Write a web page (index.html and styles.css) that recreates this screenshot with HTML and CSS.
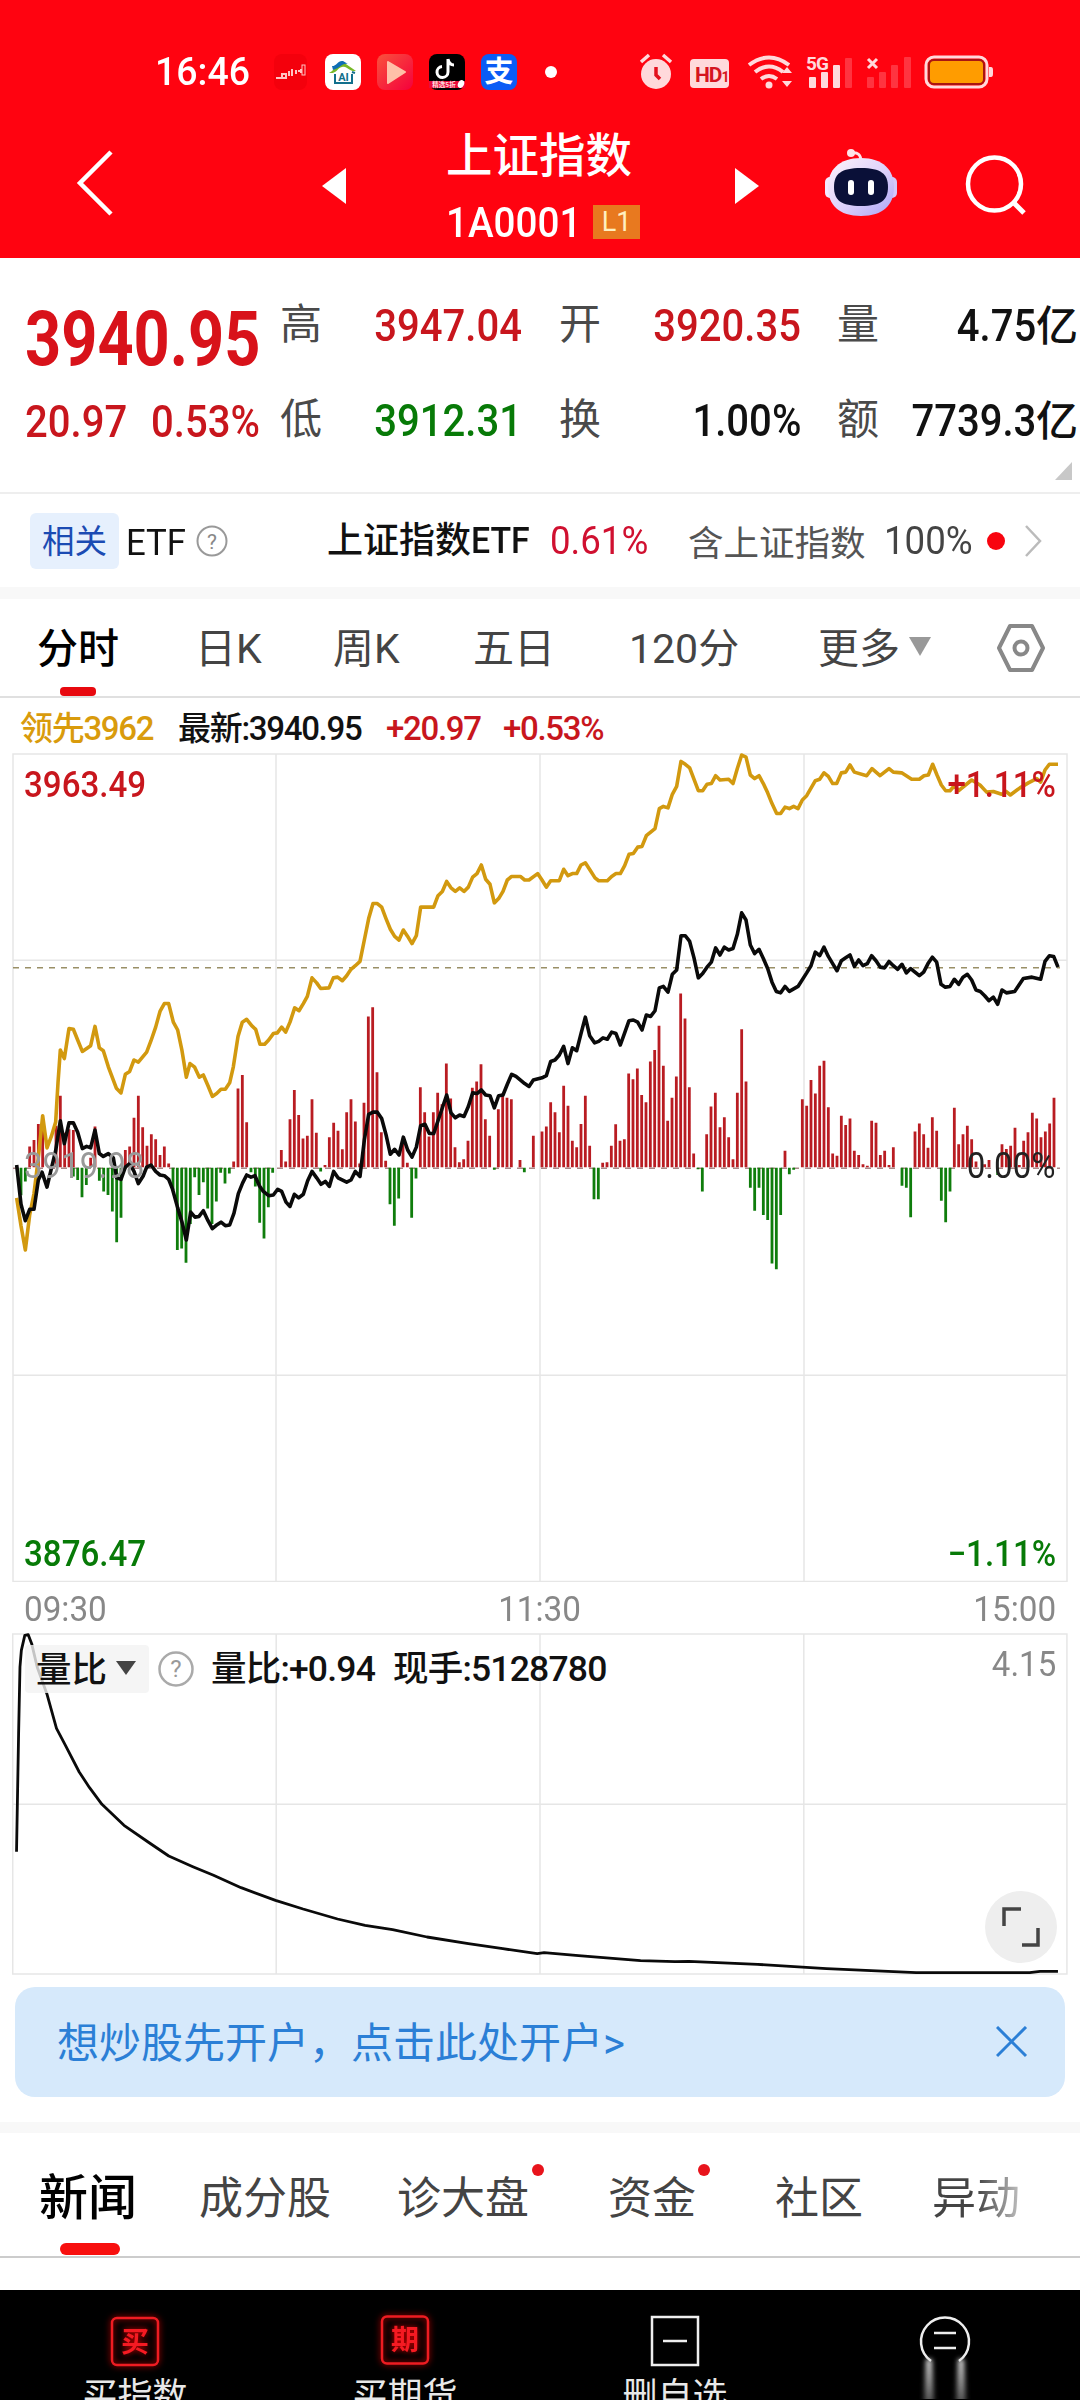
FILE: index.html
```html
<!DOCTYPE html>
<html lang="zh-CN">
<head>
<meta charset="utf-8">
<title>上证指数</title>
<link rel="stylesheet" href="styles.css">
</head>
<body>
<header class="top">
  <div class="status">
    <span class="clock num">16:46</span>
    <div class="apps">
      <svg width="36" height="36" viewBox="0 0 36 36"><rect x="1" width="33" height="36" rx="8" fill="#f4000c"/><path d="M3 24h5M9 24v-4h4v4zM16 17v5M19 15v7M23 16v4M25 17h3M28 15v4" fill="none" stroke="#ffc4c4" stroke-width="2"/><rect x="29" y="11" width="3" height="10" fill="none" stroke="#ffc4c4"/></svg>
      <svg width="36" height="36" viewBox="0 0 36 36"><rect width="36" height="36" rx="8" fill="#fff"/><path d="M4 19C12 15 11 7 18 8l13 9c-7 1-9-6-14-4C12 14 12 20 4 19z" fill="#78b928"/><path d="M7 12c5 0 6-6 11-5l5 3c-7-1-7 4-15 6z" fill="#0f6eb5"/><path d="M10 20v9h17v-9M27 18l3 1" fill="none" stroke="#126f8c" stroke-width="2"/><text x="18.500" y="27" class="ai">AI</text></svg>
      <svg width="36" height="36" viewBox="0 0 36 36"><defs><linearGradient id="play" x1="0" y1="0" x2="1" y2="1"><stop offset="0" stop-color="#f9523c"/><stop offset="1" stop-color="#f5003c"/></linearGradient></defs><rect width="36" height="36" rx="8" fill="url(#play)"/><path d="M11 8l17 10-17 11z" fill="#ffc0a8" stroke="#ffc0a8" stroke-width="2" stroke-linejoin="round"/></svg>
      <svg width="36" height="36" viewBox="0 0 36 36"><rect width="36" height="36" rx="8" fill="#000"/><path d="M19 5v13a5.500 5.500 0 1 1-6-5.500M19 5c1 5 4 6 6 6" fill="none" stroke="#fff" stroke-width="3"/><path d="M0 27h36v7H0z" fill="#e90c3c"/><text x="15" y="33" class="tag">精选5折</text><ellipse cx="32" cy="30" rx="3" ry="4" fill="#fff" transform="rotate(25 32 30)"/></svg>
      <svg width="36" height="36" viewBox="0 0 36 36"><rect width="36" height="36" rx="8" fill="#0a5cf5"/><text x="18" y="28" class="pay">支</text></svg>
      <svg width="12" height="36" viewBox="0 0 12 36"><circle cx="6" cy="18" r="6" fill="#fff"/></svg>
    </div>
    <svg class="system" width="360" height="40" viewBox="635 52 360 40">
      <g fill="#ffd9db">
        <circle cx="656" cy="74" r="15"/>
        <path d="M641 62l8-7M671 62l-8-7" stroke="#ffd9db" stroke-width="3.500"/>
        <rect x="690" y="59" width="39" height="29" rx="4"/>
        <circle cx="769" cy="85" r="3.500"/>
        <path d="M782 73l5-6 5 6zM782 81l5 6 5-6z"/>
        <rect x="809" y="77" width="7" height="11" rx="1"/><rect x="821" y="72" width="7" height="16" rx="1"/><rect x="833" y="65" width="7" height="23" rx="1"/>
        <path d="M989 67h2q2 0 2 3v4q0 3-2 3h-2z"/>
      </g>
      <path d="M656 67v8l4 4" stroke="#e3101c" stroke-width="3.500" fill="none"/>
      <path d="M761 79q8-6 16 0M755 72q14-11 28 0M749 65q20-15 40 0" fill="none" stroke="#ffd9db" stroke-width="4"/>
      <g fill="#ff3440"><rect x="845" y="58" width="7" height="30" rx="1"/><rect x="867" y="77" width="7" height="11" rx="1"/><rect x="879" y="72" width="7" height="16" rx="1"/><rect x="891" y="65" width="7" height="23" rx="1"/><rect x="904" y="57" width="7" height="31" rx="1"/></g>
      <path d="M868 59l9 9M877 59l-9 9" stroke="#ffd9db" stroke-width="3"/>
      <text x="806" y="70" class="net">5G</text>
      <text x="695" y="82" class="hd">HD<tspan font-size="14">1</tspan></text>
      <rect x="926" y="57" width="61" height="30" rx="8" fill="none" stroke="#ffd9db" stroke-width="3"/>
      <rect x="929" y="60" width="55" height="24" rx="5" fill="#ff9c00" stroke="#a81512" stroke-width="2"/>
    </svg>
  </div>
  <nav class="nav">
    <svg class="back" width="44" height="70" viewBox="0 0 44 70"><path d="M38 4L7 35l31 31" fill="none" stroke="#fff" stroke-width="4.500"/></svg>
    <svg class="prev" width="24" height="36" viewBox="0 0 24 36"><path d="M0 18L24 0v36z" fill="#fff"/></svg>
    <div class="title">
      <h1>上证指数</h1>
      <div class="code"><span class="num">1A0001</span><b>L1</b></div>
    </div>
    <svg class="next" width="24" height="36" viewBox="0 0 24 36"><path d="M24 18L0 0v36z" fill="#fff"/></svg>
    <svg class="robot" width="74" height="72" viewBox="824 146 74 72">
      <defs><linearGradient id="shell" x1="0" y1="0" x2="1" y2="1"><stop offset="0" stop-color="#fff4fa"/><stop offset=".55" stop-color="#dcd0fb"/><stop offset="1" stop-color="#aaa3f7"/></linearGradient></defs>
      <path d="M851 153q10-2 10 9" fill="none" stroke="#ffe3e8" stroke-width="3"/><circle cx="851" cy="153" r="4" fill="#ffe3e8"/>
      <rect x="825" y="177" width="12" height="21" rx="5" fill="#f5e8ff"/><rect x="885" y="177" width="12" height="21" rx="5" fill="#d5c7fa"/>
      <path d="M861 158c22 0 33 12 33 29 0 18-11 29-33 29s-33-11-33-29c0-17 11-29 33-29z" fill="url(#shell)"/>
      <path d="M861 168c20 0 27 6 27 19s-7 19-27 19-27-6-27-19 7-19 27-19z" fill="#0a1038"/>
      <rect x="848" y="180" width="6" height="15" rx="3" fill="#fff"/><rect x="868" y="180" width="6" height="15" rx="3" fill="#fff"/>
    </svg>
    <svg class="search" width="64" height="64" viewBox="964 154 64 64"><circle cx="994.500" cy="184" r="26.500" fill="none" stroke="#fff" stroke-width="4.500"/><path d="M1013 202l11 11" stroke="#fff" stroke-width="5"/></svg>
  </nav>
</header>

<section class="quote">
  <div class="last">
    <strong class="num">3940.95</strong>
    <div class="change"><span class="num">20.97</span><span class="num">0.53%</span></div>
  </div>
  <dl>
    <dt>高</dt><dd class="up"><span class="num">3947.04</span></dd>
    <dt>开</dt><dd class="up"><span class="num">3920.35</span></dd>
    <dt>量</dt><dd><span class="num">4.75</span>亿</dd>
    <dt>低</dt><dd class="down"><span class="num">3912.31</span></dd>
    <dt>换</dt><dd><span class="num">1.00%</span></dd>
    <dt>额</dt><dd><span class="num">7739.3</span>亿</dd>
  </dl>
  <i class="corner"></i>
</section>

<section class="related">
  <span class="chip">相关</span>
  <span class="etf num">ETF</span>
  <svg class="help" width="32" height="32" viewBox="0 0 32 32"><circle cx="16" cy="16" r="14.500" fill="none" stroke="#999" stroke-width="2"/><text x="16" y="23.500" class="q">?</text></svg>
  <span class="fund">上证指数<span class="num">ETF</span></span>
  <span class="rate num">0.61%</span>
  <span class="holds">含上证指数</span>
  <span class="share num">100%</span>
  <i class="dot"></i>
  <svg class="more" width="20" height="34" viewBox="0 0 20 34"><path d="M2 2l14 15L2 32" fill="none" stroke="#bbb" stroke-width="2.500"/></svg>
</section>

<nav class="periods">
  <span class="on">分时</span><span>日K</span><span>周K</span><span>五日</span><span>120分</span><span>更多<i></i></span>
  <svg width="50" height="50" viewBox="0 0 50 50"><path d="M14 3h22l11 22-11 22H14L3 25z" fill="none" stroke="#888" stroke-width="4" stroke-linejoin="round"/><circle cx="25" cy="25" r="6.500" fill="none" stroke="#888" stroke-width="4"/></svg>
</nav>

<div class="legend">
  <span class="lead">领先3962</span><span>最新:3940.95</span><span class="up">+20.97</span><span class="up">+0.53%</span>
</div>

<section class="chart price">
  <svg width="1080" height="829" viewBox="0 36.400 3240 2321.200" preserveAspectRatio="none">
    <path class="grid" d="M39 39H3201V2356H39zM828 39V2356M1620 39V2356M2412 39V2356M39 617H3201M39 1779H3201"/>
    <path class="now" d="M39 638H3180"/>
    <path class="zero" d="M39 1199H3180"/>
    <path class="bars red" d="M89 1196V1138M102 1196V1120M115 1196V1075M128 1196V1090M168 1196V1080M181 1196V996M194 1196V1100M207 1196V1090M220 1196V1092M272 1196V1170M285 1196V1082M376 1196V1148M389 1196V1138M402 1196V1058M415 1196V996M428 1196V1084M441 1196V1136M454 1196V1104M467 1196V1118M480 1196V1162M493 1196V1138M506 1196V1186M701 1196V1180M714 1196V976M727 1196V938M740 1196V1070M844 1196V1148M857 1196V1180M870 1196V1062M883 1196V980M896 1196V1050M909 1196V1116M922 1196V1108M936 1196V1006M949 1196V1100M975 1196V1190M988 1196V1112M1001 1196V1072M1014 1196V1094M1027 1196V1146M1040 1196V1042M1053 1196V1006M1066 1196V1068M1079 1196V1186M1092 1196V1016M1105 1196V774M1118 1196V748M1131 1196V930M1144 1196V1098M1157 1196V1178M1209 1196V1120M1222 1196V1184M1261 1196V972M1274 1196V1042M1287 1196V1110M1300 1196V1042M1313 1196V988M1326 1196V1020M1339 1196V906M1352 1196V1004M1365 1196V1140M1378 1196V1182M1391 1196V1174M1404 1196V1122M1417 1196V974M1430 1196V956M1443 1196V908M1456 1196V1062M1469 1196V1108M1495 1196V1034M1508 1196V990M1521 1196V1002M1534 1196V1006M1560 1196V1176M1600 1196V1108M1626 1196V1096M1639 1196V1082M1652 1196V1014M1665 1196V1042M1678 1196V1098M1691 1196V968M1704 1196V1024M1717 1196V1122M1730 1196V1140M1743 1196V1075M1756 1196V996M1769 1196V1136M1808 1196V1184M1821 1196V1182M1834 1196V1136M1847 1196V1076M1860 1196V1122M1873 1196V1118M1886 1196V934M1899 1196V950M1912 1196V920M1925 1196V994M1938 1196V1014M1951 1196V900M1964 1196V868M1977 1196V800M1990 1196V912M2003 1196V1066M2016 1196V1002M2029 1196V942M2042 1196V710M2055 1196V780M2068 1196V972M2081 1196V1158M2120 1196V1104M2133 1196V1026M2146 1196V988M2160 1196V1084M2173 1196V1056M2186 1196V1112M2199 1196V1174M2212 1196V988M2225 1196V810M2238 1196V956M2355 1196V1150M2407 1196V1006M2420 1196V1024M2433 1196V952M2446 1196V990M2459 1196V912M2472 1196V898M2485 1196V1028M2498 1196V1158M2511 1196V1164M2524 1196V1052M2537 1196V1078M2550 1196V1060M2563 1196V1150M2576 1196V1162M2589 1196V1188M2602 1196V1192M2615 1196V1066M2628 1196V1072M2641 1196V1162M2654 1196V1150M2667 1196V1190M2680 1196V1140M2745 1196V1096M2758 1196V1074M2771 1196V1104M2784 1196V1142M2797 1196V1056M2810 1196V1094M2863 1196V1030M2876 1196V1132M2889 1196V1104M2902 1196V1080M2915 1196V1118M2928 1196V1180M2954 1196V1188M2967 1196V1176M3006 1196V1132M3019 1196V1145M3032 1196V1136M3045 1196V1086M3058 1196V1190M3071 1196V1122M3084 1196V1098M3097 1196V1044M3110 1196V1060M3123 1196V1112M3136 1196V1096M3149 1196V1074M3162 1196V1002"/>
    <path class="bars green" d="M63 1198V1275M76 1198V1236M220 1198V1222M233 1198V1232M246 1198V1280M259 1198V1246M298 1198V1234M311 1198V1264M324 1198V1274M337 1198V1320M350 1198V1406M363 1198V1338M519 1198V1260M532 1198V1428M545 1198V1424M558 1198V1464M571 1198V1355M584 1198V1224M597 1198V1274M610 1198V1238M623 1198V1312M636 1198V1355M649 1198V1292M662 1198V1212M675 1198V1242M688 1198V1214M753 1198V1210M766 1198V1250M779 1198V1352M792 1198V1396M805 1198V1308M818 1198V1212M962 1198V1208M1170 1198V1300M1183 1198V1360M1196 1198V1284M1235 1198V1338M1248 1198V1228M1483 1198V1203M1573 1198V1210M1782 1198V1286M1795 1198V1286M2094 1198V1202M2107 1198V1264M2251 1198V1254M2264 1198V1318M2277 1198V1254M2290 1198V1330M2303 1198V1344M2316 1198V1466M2329 1198V1482M2342 1198V1330M2368 1198V1216M2381 1198V1203M2706 1198V1248M2719 1198V1254M2732 1198V1336M2824 1198V1290M2837 1198V1350M2850 1198V1264M2993 1198V1218"/>
    <polyline class="line gold" points="50,1282 63,1360 76,1428 89,1330 102,1270 115,1170 128,1052 141,1142 154,1110 167,1070 174,960 181,868 193,892 207,808 220,810 233,840 247,872 272,856 285,802 298,862 310,870 325,915 349,975 363,988 376,936 389,928 402,896 415,902 440,874 453,842 467,804 480,760 493,738 506,738 520,790 533,812 546,870 559,944 570,906 584,916 598,944 610,938 624,968 637,998 650,990 663,978 676,978 689,960 700,915 714,830 727,790 740,782 755,800 767,810 780,852 794,852 806,840 820,822 832,820 845,804 857,818 870,790 884,750 897,758 910,738 922,718 936,666 950,680 962,696 987,694 1000,666 1013,664 1027,674 1040,660 1053,642 1066,632 1080,620 1093,560 1106,500 1119,458 1132,458 1145,468 1158,500 1171,530 1184,550 1197,560 1210,532 1223,550 1236,570 1249,548 1262,468 1301,468 1314,436 1327,424 1340,396 1353,414 1366,424 1379,414 1392,424 1405,412 1418,384 1431,374 1444,350 1457,390 1470,404 1483,456 1496,444 1509,424 1522,392 1535,382 1561,382 1574,392 1587,392 1613,374 1626,392 1639,412 1652,394 1678,394 1691,362 1704,380 1717,374 1730,374 1743,350 1756,344 1770,364 1785,386 1796,394 1822,394 1835,382 1848,374 1861,374 1874,352 1887,320 1900,318 1913,300 1926,298 1939,268 1965,248 1978,192 1990,186 2004,190 2017,152 2030,130 2043,60 2056,68 2069,78 2095,142 2108,142 2121,124 2134,122 2147,100 2160,112 2186,110 2199,122 2212,80 2225,42 2238,48 2251,98 2264,108 2277,100 2290,122 2303,148 2316,178 2330,206 2342,206 2355,188 2368,192 2381,186 2394,192 2407,168 2420,156 2446,114 2459,110 2472,92 2485,102 2498,122 2510,122 2524,92 2537,90 2550,70 2563,90 2600,100 2616,80 2640,100 2667,80 2680,90 2705,92 2735,110 2758,110 2772,100 2785,98 2798,68 2811,98 2824,126 2837,142 2850,142 2863,128 2876,142 2915,112 2940,126 2960,146 2980,144 3005,152 3018,144 3031,154 3060,134 3085,120 3110,108 3122,118 3135,84 3148,68 3174,68"/>
    <polyline class="line black" points="50,1190 63,1300 76,1346 89,1314 102,1314 115,1232 126,1210 141,1252 154,1200 167,1150 181,1066 193,1130 207,1072 220,1072 233,1098 247,1144 260,1138 272,1142 285,1092 298,1158 310,1166 325,1158 340,1170 350,1226 363,1230 376,1196 389,1186 402,1208 415,1242 430,1220 440,1196 453,1190 467,1208 480,1218 493,1220 506,1230 517,1256 533,1310 546,1350 559,1400 572,1322 585,1336 597,1334 610,1318 624,1346 637,1368 650,1358 663,1350 676,1360 689,1358 702,1325 715,1270 728,1240 740,1218 753,1224 765,1220 778,1248 790,1264 806,1276 820,1274 833,1258 845,1264 858,1294 870,1306 883,1272 896,1282 910,1272 923,1234 936,1208 950,1226 963,1244 976,1236 988,1250 1001,1208 1014,1226 1040,1238 1053,1232 1066,1208 1080,1222 1093,1120 1106,1048 1119,1042 1132,1042 1145,1060 1158,1105 1171,1160 1184,1146 1197,1162 1210,1112 1223,1148 1236,1168 1249,1140 1262,1080 1275,1076 1288,1102 1301,1102 1314,1066 1340,994 1353,1044 1366,1058 1379,1050 1392,1054 1405,1026 1418,988 1431,990 1444,980 1457,994 1470,996 1483,1030 1496,996 1509,994 1522,964 1535,936 1548,942 1574,962 1587,970 1600,952 1626,946 1639,940 1652,900 1665,896 1678,882 1691,858 1704,906 1717,862 1730,870 1743,822 1756,776 1769,828 1784,848 1796,844 1809,834 1822,838 1835,818 1848,822 1861,854 1874,820 1887,786 1900,784 1913,790 1926,812 1939,770 1952,774 1965,758 1978,694 1990,690 2004,706 2017,656 2030,644 2043,548 2056,548 2069,564 2082,610 2095,666 2108,654 2121,636 2134,622 2147,582 2160,602 2173,580 2186,588 2199,584 2212,544 2225,484 2238,504 2251,574 2264,598 2277,586 2290,612 2303,640 2316,678 2329,704 2342,708 2355,690 2368,704 2394,690 2420,652 2433,632 2446,594 2459,604 2472,580 2485,606 2498,626 2511,646 2524,618 2537,610 2550,602 2563,634 2576,616 2589,632 2602,626 2615,604 2628,618 2641,636 2654,638 2667,620 2680,632 2693,642 2706,628 2719,652 2732,640 2745,650 2758,660 2771,650 2784,626 2797,608 2810,622 2823,684 2836,692 2850,690 2863,670 2876,684 2889,664 2902,656 2915,672 2928,700 2941,704 2954,716 2967,730 2980,720 2993,740 3006,700 3019,708 3044,704 3070,668 3096,664 3122,670 3135,620 3148,604 3161,606 3174,636"/>
  </svg>
  <div class="scale">
    <p class="up"><span class="num">3963.49</span><span class="num">+1.11%</span></p>
    <p class="mid"><span class="num">3919.98</span><span class="num">0.00%</span></p>
    <p class="down"><span class="num">3876.47</span><span class="num">−1.11%</span></p>
  </div>
</section>

<div class="times"><span class="num">09:30</span><span class="num">11:30</span><span class="num">15:00</span></div>

<section class="chart ratio">
  <svg width="1080" height="342" viewBox="0 398 1568 1026" preserveAspectRatio="none">
    <path class="grid" d="M18.500 401H1549V1421H18.500zM401 401V1421M784 401V1421M1167 401V1421M18.500 912H1549"/>
    <polyline class="line thin" points="24,1054 27,700 29,500 31,450 36,405 41,403 46,430 54,500 68,580 82,684 95,735 115,815 130,862 148,912 180,975 215,1025 245,1067 280,1099 310,1125 350,1162 400,1200 440,1226 490,1256 530,1275 570,1288 620,1310 680,1330 730,1345 780,1360 790,1357 840,1366 930,1381 980,1384 1000,1383 1100,1392 1200,1405 1330,1417 1495,1417 1510,1413 1536,1413"/>
  </svg>
  <div class="tools">
    <span class="pick">量比<i></i></span>
    <svg width="38" height="38" viewBox="0 0 38 38"><circle cx="19" cy="19" r="16.500" fill="none" stroke="#aaa" stroke-width="2.500"/><text x="19" y="27" class="q big">?</text></svg>
    <span class="val">量比:+0.94</span><span class="val hand">现手:5128780</span><span class="num max">4.15</span>
  </div>
  <svg class="expand" width="72" height="72" viewBox="0 0 72 72"><circle cx="36" cy="36" r="36" fill="#eee"/><path d="M19 35V18h17M53 37v17H37" fill="none" stroke="#444" stroke-width="3.500"/></svg>
</section>

<aside class="banner"><span>想炒股先开户，点击此处开户&gt;</span><svg width="32" height="32" viewBox="0 0 32 32"><path d="M1 1l29 29M30 1L1 30" stroke="#2b7fd6" stroke-width="3"/></svg></aside>

<nav class="news">
  <span class="on">新闻</span><span>成分股</span><span class="hot">诊大盘</span><span class="hot">资金</span><span>社区</span><span class="fade">异动</span>
</nav>

<footer class="actions">
  <div class="red"><svg width="52" height="52" viewBox="0 0 52 52"><rect x="3" y="3" width="46" height="47" rx="5"/><text x="26" y="37">买</text></svg>买指数</div>
  <div class="red"><svg width="52" height="52" viewBox="0 0 52 52"><rect x="3" y="1.500" width="46" height="47" rx="5"/><text x="26" y="35">期</text></svg>买期货</div>
  <div><svg width="52" height="52" viewBox="0 0 52 52"><path d="M3 2h46v48H3zM14 26h24"/></svg>删自选</div>
  <div><svg width="60" height="84" viewBox="0 0 60 84"><defs><linearGradient id="glow" x1="0" y1="0" x2="0" y2="1"><stop offset="0" stop-color="#ddd"/><stop offset="1" stop-color="#444"/></linearGradient><filter id="soft"><feGaussianBlur stdDeviation="2.500"/></filter></defs><path d="M16 46a24 24 0 1 1 28 0M19 18h22M19 33h22"/><path class="glow" d="M11 44h6l2 46H9zM43 44h6l2 46H41z"/></svg></div>
</footer>
</body>
</html>
```
FILE: styles.css
```css
* { box-sizing: border-box; }
body {
  margin: 0; width: 1080px; height: 2400px; overflow: hidden; background: #fff; color: #111;
  font-family: Roboto, "Noto Sans CJK SC", sans-serif;
}
svg { display: block; flex: none; }
h1, p, dl, dt, dd { margin: 0; font-weight: 400; }
span, strong { white-space: nowrap; }
.num { display: inline-block; transform: scaleX(.89); transform-origin: left center; }
.up { color: #c8161d; }
.down { color: #077a07; }

/* header */
.top { height: 258px; padding-top: 52px; background: #ff0310; color: #fff; }
.status { display: flex; height: 40px; align-items: center; padding-left: 155px; }
.clock { width: 117px; font-size: 39px; line-height: 44px; font-weight: 500; transform: scaleX(.96); }
.apps { display: flex; gap: 16px; width: 363px; }
.apps svg:first-child { margin-left: 1px; }
.apps svg:last-child { margin-left: 12px; }
.ai { font: 700 11px Roboto, sans-serif; text-anchor: middle; fill: #126f8c; }
.tag { font: 700 6.500px "Noto Sans CJK SC", sans-serif; text-anchor: middle; fill: #ffd9db; }
.pay { font: 700 29px "Noto Sans CJK SC", sans-serif; text-anchor: middle; fill: #fff; }
.net { font: 700 19px Roboto, sans-serif; fill: #ffd9db; letter-spacing: -1px; }
.hd { font: 700 21px Roboto, sans-serif; fill: #d5141f; letter-spacing: -1px; }
.nav { display: flex; height: 166px; }
.back { margin: 56px 0 0 73px; }
.prev { margin: 76px 0 0 205px; }
.title { width: 292px; margin-left: 100px; padding-top: 34px; }
h1 { font-size: 46.5px; line-height: 60px; font-weight: 500; }
.code { display: flex; align-items: center; height: 46px; margin-top: 13px; }
.code .num { width: 147px; font-size: 42px; font-weight: 500; transform: scaleX(.92); }
.code b { width: 47px; height: 34px; background: #e8791f; color: #fff0c0; font-size: 27px; font-weight: 400; line-height: 34px; text-align: center; }
.next { margin: 76px 0 0 -3px; }
.robot { margin: 54px 0 0 65px; }
.search { margin: 62px 0 0 66px; }

/* quote */
.quote { position: relative; display: flex; height: 236px; border-bottom: 2px solid #eee; }
.last { width: 280px; padding: 38px 0 0 25px; color: #d8121a; }
.last strong { display: block; height: 86px; font-size: 76px; line-height: 86px; transform: scaleX(.83); }
.change { display: flex; height: 60px; margin-top: 10px; font-size: 45px; font-weight: 500; line-height: 60px; color: #c8161d; }
.change span { width: 126px; transform: scaleX(.89); }
dl { display: grid; grid-template-columns: 43px 199px 37px 43px 199px 36px 43px 198px; grid-template-rows: 95px 95px; padding-top: 20px; }
dt { height: 95px; font-size: 42px; line-height: 94px; color: #4a4a4a; }
dt:nth-of-type(n) { grid-column: 1; }
dt:nth-of-type(3n+2) { grid-column: 4; }
dt:nth-of-type(3n) { grid-column: 7; }
dd { font-size: 45px; font-weight: 500; line-height: 95px; text-align: right; }
dd .num { transform-origin: right center; }
dd:nth-of-type(3n) { font-size: 42px; }
dd:nth-of-type(3n) .num { font-size: 45px; }
.corner { position: absolute; right: 8px; bottom: 12px; border: solid transparent; border-width: 0 0 18px 17px; border-bottom-color: #c8c8c8; }

/* related ETF */
.related { display: flex; align-items: center; height: 93px; padding-left: 30px; }
.chip { width: 89px; height: 56px; border-radius: 6px; background: #e6f0fd; color: #1b4bb3; font-size: 32.500px; line-height: 58px; text-align: center; }
.etf { width: 69px; margin-left: 7px; padding-top: 3px; font-size: 37px; transform: scaleX(.94); }
.help { margin-left: 1px; }
.q { font: 21px Roboto, sans-serif; fill: #888; text-anchor: middle; }
.q.big { font-size: 24px; fill: #999; }
.fund { width: 223px; margin-left: 99px; font-size: 36px; line-height: 50px; font-weight: 500; }
.fund .num { transform: scaleX(.94); }
.rate { width: 138px; font-size: 39px; color: #d01030; transform: scaleX(.94); }
.holds { width: 196px; font-size: 35.500px; color: #555; }
.share { width: 103px; font-size: 39px; color: #444; transform: scaleX(.94); }
.dot { width: 18px; height: 18px; border-radius: 50%; background: #f8040f; }
.more { margin-left: 19px; }

/* period tabs */
.periods { display: grid; grid-template-columns: 158px 138px 140px 156px 189px 178px 50px; align-items: center; height: 111px; padding: 0 0 0 37px; border-top: 12px solid #f8f8f8; border-bottom: 2px solid #e0e0e0; color: #444; font-size: 41px; }
.periods span { position: relative; height: 97px; line-height: 101px; }
.periods .on { color: #000; font-weight: 500; }
.periods .on::after { content: ""; position: absolute; left: 23px; bottom: 0; width: 36px; height: 9px; border-radius: 4px; background: #e8090f; }
.periods i { display: inline-block; margin-left: 9px; border: solid transparent; border-width: 19px 11px 0; border-top-color: #999; vertical-align: 7px; }
.legend { display: flex; height: 55px; padding-left: 20px; font-size: 33px; line-height: 61px; letter-spacing: -1.300px; font-weight: 500; }
.legend span:nth-child(1) { width: 158px; }
.legend span:nth-child(2) { width: 208px; }
.legend span:nth-child(3) { width: 117px; }
.lead { color: #d99b0c; }

/* charts */
.chart { position: relative; }
.chart > svg * { fill: none; vector-effect: non-scaling-stroke; }
.grid { stroke: #e6e6e6; stroke-width: 1.500; }
.now { stroke: #9a8f66; stroke-width: 1.500; stroke-dasharray: 6 6; }
.zero { stroke: #a88; stroke-width: 1.500; stroke-dasharray: 6 6; }
.bars { stroke-width: 2.800; }
.red.bars { stroke: #b91c22; }
.green.bars { stroke: #0f7d0c; }
.line { stroke-width: 3.600; stroke-linejoin: round; }
.gold { stroke: #d2990f; }
.black { stroke: #0a0a0a; }
.thin { stroke: #0a0a0a; stroke-width: 2.800; }
.price { height: 829px; }
.scale { position: absolute; inset: 11px 24px 7px 24px; display: flex; flex-direction: column; justify-content: space-between; font-size: 36px; line-height: 42px; font-weight: 500; }
.scale p { display: flex; justify-content: space-between; font-weight: 500; }
.scale .num { transform: scaleX(.92); }
.scale .num:last-child { transform-origin: right center; }
.scale .mid { color: #999; margin-bottom: 8px; font-weight: 400; }
.mid .num:last-child { color: #222; }
.times { display: flex; justify-content: space-between; height: 51px; padding: 0 24px; font-size: 35px; line-height: 56px; color: #888; }
.times .num { transform: scaleX(.95); }
.times .num:nth-child(2) { transform-origin: center; }
.times .num:last-child { transform-origin: right center; }
.ratio { height: 342px; }
.tools { position: absolute; left: 25px; right: 24px; top: 12px; display: flex; align-items: center; height: 48px; font-size: 35.500px; }
.pick { width: 124px; height: 48px; padding-left: 11px; border-radius: 4px; background: rgba(242,242,242,.8); line-height: 51px; font-weight: 500; }
.pick i { display: inline-block; margin-left: 9px; border: solid transparent; border-width: 14px 10px 0; border-top-color: #444; vertical-align: 7px; }
.tools svg { margin: 0 16px 0 8px; }
.tools svg * { fill: none; }
.tools .q { fill: #999; }
.val { width: 182px; height: 48px; line-height: 49px; letter-spacing: -.800px; font-weight: 500; }
.hand { width: 230px; }
.max { margin: -11px 0 0 auto; color: #888; transform-origin: right center; transform: scaleX(.93); }
.expand { position: absolute; left: 985px; top: 258px; }
.ratio > .expand circle { fill: #eee; }

/* banner */
.banner { display: flex; align-items: center; justify-content: space-between; height: 110px; margin: 12px 15px 25px; padding: 0 37px 0 42px; border-radius: 20px; background: #d6e9fb; color: #2b7fd6; font-size: 42px; }
.banner span { height: 110px; line-height: 114px; }

/* news tabs */
.news { display: grid; grid-template-columns: 160px 198px 211px 167px 157px 90px; height: 136px; padding-left: 39px; border-top: 11px solid #f8f8f8; border-bottom: 2px solid #ccc; font-size: 44px; line-height: 132px; color: #444; }
.news span { position: relative; height: 123px; }
.news .on { font-size: 49px; font-weight: 500; color: #000; }
.news .on::after { content: ""; position: absolute; left: 21px; bottom: 1px; width: 60px; height: 12px; border-radius: 6px; background: #f8100f; }
.hot::after { content: ""; position: absolute; left: 135px; top: 31px; width: 12px; height: 12px; border-radius: 50%; background: #e8141c; }
.hot + .hot::after { left: 90px; }
.fade { color: transparent; background: linear-gradient(90deg, #444 50%, #bbb 96%); background-clip: text; -webkit-background-clip: text; }

/* bottom actions */
.actions { display: grid; grid-template-columns: repeat(4, 270px); height: 110px; margin-top: 32px; overflow: hidden; background: #000; color: #e8e8e8; font-size: 35px; line-height: 52px; }
.actions div { display: flex; flex-direction: column; align-items: center; padding-top: 25px; }
.actions svg { fill: none; stroke: #eee; stroke-width: 2.500; margin-bottom: 4px; }
.actions text { font: 700 28px "Noto Sans CJK SC", sans-serif; text-anchor: middle; fill: #f51a22; stroke: none; }
.actions .red svg { stroke: #ee1c22; filter: drop-shadow(0 0 3px #d00); }
.actions .glow { fill: url(#glow); stroke: none; filter: url(#soft); }
```
